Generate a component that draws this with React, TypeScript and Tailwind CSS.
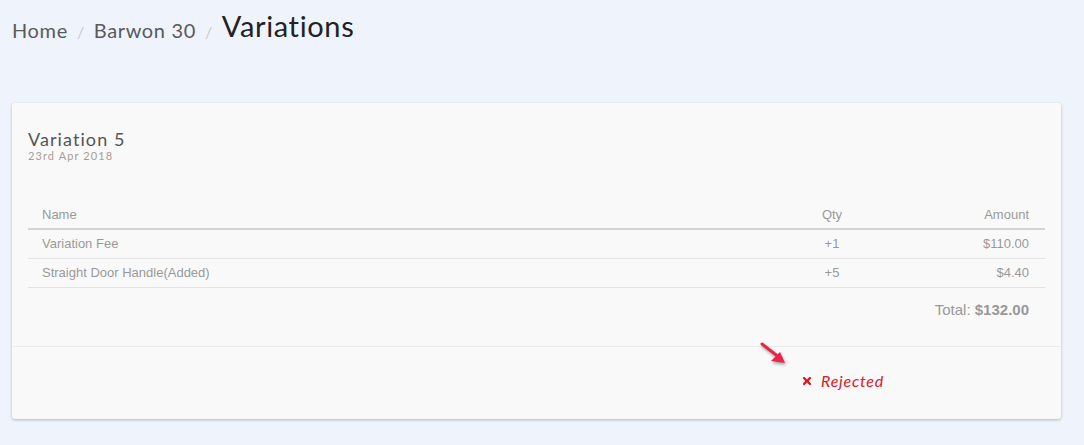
import { FaTimes } from "react-icons/fa";

const rows = [
  { name: "Variation Fee", qty: "+1", amount: "$110.00" },
  { name: "Straight Door Handle(Added)", qty: "+5", amount: "$4.40" },
];

export default function App() {
  return (
    <div className="min-h-[445px] w-full bg-[#eef3fc] px-3 pt-3" style={{ fontFamily: "Lato, sans-serif" }}>
      {/* breadcrumb */}
      <div className="flex h-[28px] items-end gap-[9px] tracking-[0.04em]">
        <span className="text-[20px] leading-none text-[#5a5a5a]">Home</span>
        <span className="text-[16px] leading-none text-[#c8cbd2]">/</span>
        <span className="text-[20px] leading-none text-[#5a5a5a]">Barwon 30</span>
        <span className="text-[16px] leading-none text-[#c8cbd2]">/</span>
        <span className="text-[29px] leading-none text-[#222]">Variations</span>
      </div>

      {/* card */}
      <div className="mt-[63px] w-[1049px] rounded-[3px] bg-[#f9f9f9] shadow-[0_1px_3px_rgba(0,0,0,0.25)]">
        <div className="px-4 pt-[25px] pb-[25px]">
          <h2 className="text-[18px] leading-[22px] tracking-[0.06em] text-[#555]">Variation 5</h2>
          <p className="text-[11px] leading-[12px] tracking-[0.1em] text-[#a89c92]">23rd Apr 2018</p>

          <table className="mt-[40px] w-full border-collapse text-[13px]" style={{ fontFamily: "'Liberation Sans', Arial, sans-serif" }}>
            <thead>
              <tr className="h-[27px] border-b-2 border-[#d4d4d4] text-[#999]">
                <th className="pl-[14px] text-left font-normal">Name</th>
                <th className="w-[120px] text-center font-normal">Qty</th>
                <th className="w-[153px] pr-[16px] text-right font-normal">Amount</th>
              </tr>
            </thead>
            <tbody>
              {rows.map((r) => (
                <tr key={r.name} className="h-[29px] border-b border-[#e4e4e4] text-[#999]">
                  <td className="pl-[14px]">{r.name}</td>
                  <td className="text-center">{r.qty}</td>
                  <td className="pr-[16px] text-right">{r.amount}</td>
                </tr>
              ))}
            </tbody>
          </table>

          <div
            className="mt-[11px] pr-[16px] text-right text-[15px] text-[#999]"
            style={{ fontFamily: "'Liberation Sans', Arial, sans-serif" }}
          >
            Total: <span className="font-bold">$132.00</span>
          </div>
        </div>

        {/* footer */}
        <div className="relative flex h-[73px] items-center border-t border-[#ececec] pb-[4px] pl-[789px]">
          <svg
            className="absolute left-[746px] top-[-6px]"
            width="34"
            height="30"
            viewBox="0 0 34 30"
            style={{ filter: "drop-shadow(1px 2px 1.5px rgba(0,0,0,0.35))" }}
          >
            <path d="M4 3 L22 17" stroke="#e8264a" strokeWidth="3" strokeLinecap="round" />
            <path d="M27 22 L13 20 L22 11 Z" fill="#e8264a" />
          </svg>
          <span className="flex items-center gap-[8px] text-[16px] italic tracking-[0.05em] text-[#e0151f]">
            <FaTimes className="text-[12px]" />
            Rejected
          </span>
        </div>
      </div>
    </div>
  );
}
